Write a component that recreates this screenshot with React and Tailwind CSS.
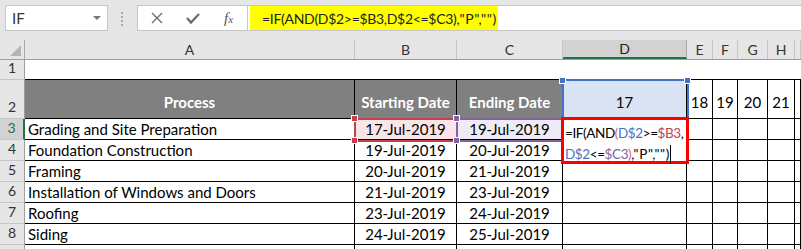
const COLS = [
  { key: 'A', w: 330 },
  { key: 'B', w: 102 },
  { key: 'C', w: 106 },
  { key: 'D', w: 124 },
  { key: 'E', w: 26 },
  { key: 'F', w: 25 },
  { key: 'G', w: 30 },
  { key: 'H', w: 27 },
  { key: 'I', w: 6 },
]

const ROWS = [
  ['Grading and Site Preparation', '17-Jul-2019', '19-Jul-2019'],
  ['Foundation Construction', '19-Jul-2019', '20-Jul-2019'],
  ['Framing', '20-Jul-2019', '21-Jul-2019'],
  ['Installation of Windows and Doors', '21-Jul-2019', '23-Jul-2019'],
  ['Roofing', '23-Jul-2019', '24-Jul-2019'],
  ['Siding', '24-Jul-2019', '25-Jul-2019'],
  ['', '', ''],
]

const font = { fontFamily: 'Lato, "Liberation Sans", sans-serif' }

function FormulaBar() {
  return (
    <div className="flex h-[40px] items-start pt-[5px]">
      <div className="ml-[5px] flex h-[26px] w-[103px] items-center justify-between border border-[#c6c6c6] bg-white pl-[6px] pr-[6px] text-[15px] text-[#333]">
        <span>IF</span>
        <span className="h-0 w-0 border-x-[4px] border-t-[4px] border-x-transparent border-t-[#777]" />
      </div>
      <div className="ml-[13px] mt-[7px] flex w-[3px] flex-col gap-[2px]">
        <span className="h-[2px] w-[2px] bg-[#aaa]" />
        <span className="h-[2px] w-[2px] bg-[#aaa]" />
        <span className="h-[2px] w-[2px] bg-[#aaa]" />
        <span className="h-[2px] w-[2px] bg-[#aaa]" />
      </div>
      <div className="ml-[13px] flex h-[26px] w-[111px] items-center border border-[#c6c6c6] bg-white">
        <svg width="12" height="12" viewBox="0 0 12 12" className="ml-[13px]">
          <path d="M1 1 L11 11 M11 1 L1 11" stroke="#6e6e6e" strokeWidth="1.4" />
        </svg>
        <svg width="14" height="11" viewBox="0 0 14 11" className="ml-[23px]">
          <path d="M1 5 L5 9.5 L13 1" fill="none" stroke="#6e6e6e" strokeWidth="2.4" />
        </svg>
        <span className="ml-[24px] font-serif italic text-[15px] text-[#555]" style={{ fontFamily: '"Liberation Serif", serif' }}>
          f<span className="text-[11px]">x</span>
        </span>
      </div>
      <div className="flex h-[26px] flex-1 border-y border-[#c6c6c6] bg-white">
        <div className="ml-[2px] flex h-full w-[248px] items-center bg-[#ffff00] pl-[12px] text-[14px] tracking-[-0.3px] text-[#222] whitespace-nowrap">
          =IF(AND(D$2&gt;=$B3,D$2&lt;=$C3),<span className="tracking-[0.6px]">"P",""</span>)
        </div>
      </div>
    </div>
  )
}

function ColumnHeaders() {
  return (
    <div className="flex h-[20px] border-b border-[#9e9e9e]">
      <div className="relative w-[25px] border-r border-[#ababab]">
        <span className="absolute bottom-[3px] right-[3px] h-0 w-0 border-b-[11px] border-l-[11px] border-b-[#b5b5b5] border-l-transparent" />
      </div>
      {COLS.map((c) => (
        <div
          key={c.key}
          className={
            c.key === 'D'
              ? 'flex items-center justify-center border-r border-b-2 border-r-[#ababab] border-b-[#217346] bg-[#d2d2d2] text-[14px] text-[#222]'
              : 'flex items-center justify-center border-r border-[#c6c6c6] text-[14px] text-[#333]'
          }
          style={{ width: c.w }}
        >
          {c.key !== 'I' && c.key}
        </div>
      ))}
    </div>
  )
}

function RowHead({ n, h, active }) {
  return (
    <div
      className={
        active
          ? 'flex w-[25px] items-end justify-center border-r-2 border-b border-r-[#217346] border-b-[#c6c6c6] bg-[#d2d2d2] pb-[1px] text-[14px] text-[#217346]'
          : 'flex w-[25px] items-end justify-center border-r border-b border-r-[#9e9e9e] border-b-[#c6c6c6] bg-[#e6e6e6] pb-[1px] text-[14px] text-[#333]'
      }
      style={{ height: h }}
    >
      {n}
    </div>
  )
}

export default function App() {
  return (
    <div className="relative h-[249px] w-[801px] overflow-hidden bg-[#e6e6e6]" style={font}>
      <FormulaBar />
      <ColumnHeaders />

      {/* row 1 */}
      <div className="flex h-[20px]">
        <RowHead n="1" h={20} />
        <div className="flex-1 border-b border-black bg-white" />
      </div>

      {/* row 2 header */}
      <div className="flex h-[39px]">
        <RowHead n="2" h={39} />
        {COLS.map((c, i) => {
          let cls = 'flex items-end justify-center border-r border-b border-black pb-[5px] text-[15px] '
          let text = ''
          if (i < 3) {
            cls += 'bg-[#808080] font-bold text-white'
            text = ['Process', 'Starting Date', 'Ending Date'][i]
          } else if (c.key === 'D') {
            cls += 'bg-[#dae3f3] text-black'
            text = '17'
          } else {
            cls += 'bg-white text-black'
            text = { E: '18', F: '19', G: '20', H: '21' }[c.key] || ''
          }
          return (
            <div key={c.key} className={cls} style={{ width: c.w }}>
              {text}
            </div>
          )
        })}
      </div>

      {/* data rows */}
      {ROWS.map((r, ri) => (
        <div key={ri} className="flex h-[21px]">
          <RowHead n={ri < 6 ? ri + 3 : ''} h={21} active={ri === 0} />
          {COLS.map((c, i) => {
            let cls = 'flex items-center border-r border-b border-black text-[15px] text-black whitespace-nowrap '
            let text = ''
            if (i === 0) {
              cls += 'bg-white pl-[3px]'
              text = r[0]
            } else if (i === 1 || i === 2) {
              cls += 'justify-center '
              cls += ri === 0 ? (i === 1 ? 'bg-[#f9e5e7]' : 'bg-[#efebf5]') : 'bg-white'
              text = r[i]
            } else {
              cls += 'bg-white'
            }
            return (
              <div key={c.key} className={cls} style={{ width: c.w }}>
                {text}
              </div>
            )
          })}
        </div>
      ))}

      {/* range highlights */}
      <div className="absolute left-[562px] top-[79px] h-[41px] w-[127px] border-2 border-[#4472c4]" />
      <span className="absolute left-[559px] top-[77px] h-[7px] w-[7px] border border-white bg-[#4472c4]" />
      <span className="absolute left-[684px] top-[77px] h-[7px] w-[7px] border border-white bg-[#4472c4]" />

      <div className="absolute left-[354px] top-[118px] h-[24px] w-[104px] border-2 border-[#c0424f]" />
      <div className="absolute left-[456px] top-[118px] h-[24px] w-[108px] border-2 border-[#8064a2]" />
      <span className="absolute left-[351px] top-[115px] h-[7px] w-[7px] border border-white bg-[#c0424f]" />
      <span className="absolute left-[351px] top-[137px] h-[7px] w-[7px] border border-white bg-[#c0424f]" />
      <span className="absolute left-[453px] top-[115px] h-[7px] w-[7px] border border-white bg-[#8064a2]" />
      <span className="absolute left-[453px] top-[137px] h-[7px] w-[7px] border border-white bg-[#8064a2]" />

      {/* in-cell editor */}
      <div className="absolute left-[561px] top-[117px] h-[47px] w-[128px] border-[3px] border-[#ff0000] bg-white pl-[1px] pt-[3px] text-[13.5px] leading-[21px] tracking-[-0.4px] text-black whitespace-nowrap">
        <div>
          =IF(AND<span className="text-[#e0608a]">(</span>
          <span className="text-[#4472c4]">D$2</span>&gt;=<span className="text-[#c0424f]">$B3</span>,
        </div>
        <div className="flex items-center">
          <span className="text-[#4472c4]">D$2</span>&lt;=<span className="text-[#8064a2]">$C3</span>
          <span className="text-[#e0608a]">)</span>
          <span className="tracking-[0.6px]">,"P",""</span>
          <span>)</span>
          <span className="ml-[1px] inline-block h-[19px] w-[1px] bg-black" />
        </div>
      </div>
    </div>
  )
}
